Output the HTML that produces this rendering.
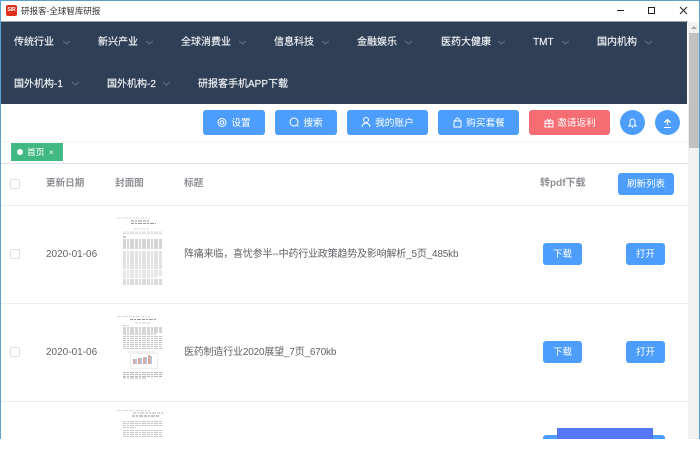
<!DOCTYPE html>
<html lang="zh-CN"><head><meta charset="utf-8"><title>研报客</title>
<style>
html,body{margin:0;padding:0;background:#fff}
#w{position:relative;width:700px;height:456px;overflow:hidden;background:#fff;font-family:"Liberation Sans","Noto Sans CJK SC",sans-serif;font-size:10px;color:#606266;filter:blur(.35px)}
#w div,#w span.a,#w svg{position:absolute}
.t{white-space:nowrap;line-height:14px}
.n{color:#f2f4f7;font-size:10px;white-space:nowrap;line-height:14px;-webkit-text-stroke:.15px #f2f4f7}
.b{background:#4d9efc;border-radius:3px;color:#fff;text-align:center;white-space:nowrap}
.tb{height:25px;line-height:27px;top:110px;font-size:9.7px}
.tb span{margin-left:14px}
.sb{width:39px;height:22px;line-height:24px;font-size:9.5px}
.circ{width:25px;height:25px;top:110px;border-radius:50%;background:#4d9efc}
.chk{left:10px;width:10px;height:10px;box-sizing:border-box;border:1px solid #dcdfe6;border-radius:2px;background:#fff}
.h{color:#8e9095;font-weight:bold;top:177px;font-size:9.6px}
.l{height:1px;left:1px;width:687px;background:#ebeef5}
.ti{letter-spacing:-.19px}
</style></head><body><div id="w">

<div style="left:0;top:0;width:700px;height:1px;background:#5aa0d0"></div>
<div style="left:0;top:1px;width:1px;height:438px;background:#5aa0d0"></div>
<div style="left:699px;top:1px;width:1px;height:438px;background:#5aa0d0"></div>

<div style="left:6px;top:5px;width:11px;height:11px;background:#e0301e;border-radius:2px;color:#fff;font-size:5px;font-weight:bold;line-height:11px;text-align:center">SIR</div>
<div class="t" style="left:21px;top:4px;color:#333;font-size:8.5px">研报客-全球智库研报</div>
<svg style="left:615px;top:4px" width="80" height="12" viewBox="0 0 80 12" fill="none" stroke="#222" stroke-width="1"><path d="M2 6.500H9"/><rect x="33.500" y="3.500" width="6" height="6"/><path d="M65 3L72 10M72 3L65 10"/></svg>

<div style="left:1px;top:21px;width:687px;height:1px;background:#9aa3ad"></div>
<div style="left:1px;top:22px;width:686px;height:82px;background:#2f3f56"></div>

<div class="n" style="left:14px;top:36px">传统行业</div>
<div class="n" style="left:98px;top:36px">新兴产业</div>
<div class="n" style="left:181px;top:36px">全球消费业</div>
<div class="n" style="left:274px;top:36px">信息科技</div>
<div class="n" style="left:357px;top:36px">金融娱乐</div>
<div class="n" style="left:441px;top:36px">医药大健康</div>
<div class="n" style="left:533px;top:36px">TMT</div>
<div class="n" style="left:597px;top:36px">国内机构</div>
<div class="n" style="left:14px;top:78px">国外机构-1</div>
<div class="n" style="left:107px;top:78px">国外机构-2</div>
<div class="n" style="left:198px;top:78px">研报客手机APP下载</div>

<svg style="left:0;top:22px" width="700" height="82" fill="none" stroke="#66727f" stroke-width="1"><path d="M63 19l3.500 3 3.500-3M146 19l3.500 3 3.500-3M239 19l3.500 3 3.500-3M322 19l3.500 3 3.500-3M405 19l3.500 3 3.500-3M498 19l3.500 3 3.500-3M562 19l3.500 3 3.500-3M645 19l3.500 3 3.500-3M72 60l3.500 3 3.500-3M163 60l3.500 3 3.500-3"/></svg>

<div style="left:688px;top:22px;width:11px;height:417px;background:#f1f1f1"></div>
<div style="left:689px;top:33px;width:10px;height:115px;background:#c1c1c1"></div>
<svg style="left:690px;top:25px" width="8" height="5"><path d="M1 4L4 1L7 4Z" fill="#a8a8a8"/></svg>

<div style="left:1px;top:104px;width:687px;height:37px;background:#fff;box-shadow:0 1px 3px rgba(0,0,0,.06)"></div>

<div class="b tb" style="left:203px;width:62px"><span>设置</span></div>
<div class="b tb" style="left:275px;width:62px"><span>搜索</span></div>
<div class="b tb" style="left:347px;width:81px"><span>我的账户</span></div>
<div class="b tb" style="left:438px;width:81px"><span>购买套餐</span></div>
<div class="b tb" style="left:529px;width:81px;background:#f56c72"><span>邀请返利</span></div>
<div class="circ" style="left:620px"></div>
<div class="circ" style="left:655px"></div>

<svg style="left:0;top:104px" width="700" height="40" fill="none" stroke="#fff" stroke-width="1">
<circle cx="222" cy="18.500" r="4"/><circle cx="222" cy="18.500" r="1.800"/>
<circle cx="294" cy="18" r="4"/><path d="M297 21l1.500 1.500"/>
<circle cx="366" cy="16" r="2.500"/><path d="M362 23c0-5 8-5 8 0"/>
<rect x="454" y="17" width="7" height="6"/><path d="M455.500 17c0-4 4-4 4 0"/>
<rect x="545" y="17" width="8" height="6"/><path d="M545 19.500h8M549 17v6M547 15l2 2 2-2"/>
<path d="M628 22h9M629.500 22c1-1 .5-2.500 .5-4 0-4 5-4 5 0 0 1.500-.5 3 .5 4M632 23.500h1"/>
<path d="M664 23.500h7" /><path d="M667.500 21v-5M664.500 18.500l3-3 3 3" stroke-width="1.300"/>
</svg>

<div style="left:11px;top:143px;width:52px;height:18px;background:#42b983;color:#fff;font-size:8.8px;line-height:19px"><span class="a" style="left:6px;top:6px;width:6px;height:6px;border-radius:50%;background:#fff"></span><span class="a" style="left:16px;top:0">首页</span><span class="a" style="left:38px;top:0;font-size:8px">×</span></div>

<div class="l" style="top:163px;background:#dfe3e9"></div>

<div class="chk" style="top:179px"></div>
<div class="t h" style="left:46px">更新日期</div>
<div class="t h" style="left:115px">封面图</div>
<div class="t h" style="left:184px">标题</div>
<div class="t h" style="left:540px;font-size:10px">转pdf下载</div>
<div class="b" style="left:618px;top:173px;width:56px;height:22px;line-height:24px;font-size:9.5px">刷新列表</div>
<div class="l" style="top:205px"></div>

<div class="chk" style="top:249px"></div>
<div class="t" style="left:46px;top:248px">2020-01-06</div>
<svg style="left:116px;top:217px" width="48" height="70" fill="none" stroke="#b4b4b4" stroke-width=".7" stroke-dasharray="3 1 2 1 4 1">
<path d="M1 1H34" stroke="#ccc"/><path d="M15 4H34" stroke="#666"/><path d="M15 6.500H40" stroke="#777"/>
<path d="M18 12H33" stroke="#ccc"/><path d="M7 15H47M7 16.500H47" stroke="#ccc"/>
<path d="M7 20H10" stroke="#666"/>
<path d="M7 23H47M7 25H47M7 27H47M7 29H47M7 31H47" stroke="#8c8c8c"/>
<path d="M7 35H47M7 37H47M7 39H47M7 41H47M7 43H47M7 45H47M7 47H47M7 49H47M7 51H47"/>
<path d="M7 54H47M7 56H47M7 58H47M7 60H40" stroke="#bcbcbc"/>
<path d="M7 63H47M7 65H47M7 67H47" stroke="#a0a0a0"/>
</svg>
<div class="t ti" style="left:184px;top:248px">阵痛来临，喜忧参半--中药行业政策趋势及影响解析_5页_485kb</div>
<div class="b sb" style="left:543px;top:243px">下载</div>
<div class="b sb" style="left:626px;top:243px">打开</div>
<div class="l" style="top:303px"></div>

<div class="chk" style="top:347px"></div>
<div class="t" style="left:46px;top:346px">2020-01-06</div>
<svg style="left:116px;top:315px" width="48" height="66" fill="none" stroke="#b4b4b4" stroke-width=".7" stroke-dasharray="3 1 2 1 4 1">
<path d="M1 1.500H34" stroke="#ccc"/><path d="M14 4.500H40" stroke="#777"/><path d="M19 8H34" stroke="#bbb"/>
<path d="M7 10.500H14" stroke="#bbb"/>
<path d="M7 13H47M7 15H47M7 17H47M7 19H40" stroke="#8c8c8c"/>
<path d="M7 21.500H47M7 23.500H47M7 25.500H47M7 27.500H47M7 29.500H47M7 31.500H47M7 33.500H47"/>
<path d="M12 37H40" stroke="#ccc"/>
<rect x="14.500" y="38.500" width="27" height="15" fill="#fff" stroke="#e4e4e4" stroke-dasharray="none"/>
<g stroke-width="1" stroke-dasharray="none"><path d="M18 44v5" stroke="#b0513f"/><path d="M20 44v5" stroke="#7b88aa"/><path d="M23 43v6" stroke="#b0513f"/><path d="M25 43v6" stroke="#7b88aa"/><path d="M28 42v7" stroke="#b0513f"/><path d="M30 42v7" stroke="#7b88aa"/><path d="M33 40v9" stroke="#b0513f"/><path d="M35 41v8" stroke="#7b88aa"/></g>
<path d="M7 57.500H47M7 59.500H47M7 61.500H47M7 63H30" stroke="#a0a0a0"/>
</svg>
<div class="t ti" style="left:184px;top:346px">医药制造行业2020展望_7页_670kb</div>
<div class="b sb" style="left:543px;top:341px">下载</div>
<div class="b sb" style="left:626px;top:341px">打开</div>
<div class="l" style="top:401px"></div>

<svg style="left:116px;top:410px" width="48" height="29" fill="none" stroke="#b4b4b4" stroke-width=".7" stroke-dasharray="3 1 2 1 4 1">
<path d="M1 .5H34" stroke="#ccc"/><path d="M17 3H47" stroke="#999"/><path d="M16 6H44" stroke="#666"/>
<path d="M7 11.500H47M7 13.500H47M7 15.500H47M7 17.500H20M7 20.500H47M7 22.500H47M7 24.500H47M7 26.500H47"/>
</svg>
<div class="b" style="left:543px;top:435px;width:39px;height:4px;border-radius:3px 3px 0 0"></div>
<div class="b" style="left:626px;top:435px;width:39px;height:4px;border-radius:3px 3px 0 0"></div>
<div style="left:557px;top:428px;width:96px;height:11px;background:#5578fb"></div>

<div style="left:0;top:439px;width:700px;height:17px;background:#fff"></div>
</div></body></html>
